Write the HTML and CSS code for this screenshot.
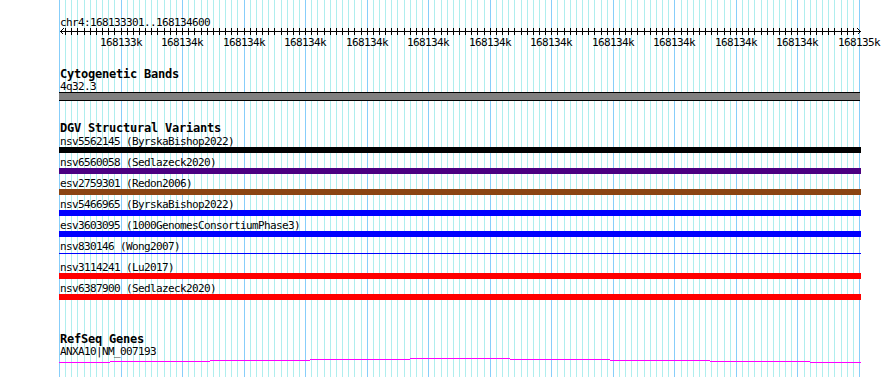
FILE: index.html
```html
<!DOCTYPE html>
<html lang="en">
<head>
    <meta charset="UTF-8">
    <meta name="viewport" content="width=device-width, initial-scale=1.0">
    <title>chr4:168133301..168134600</title>
    <link rel="stylesheet" href="styles.css">
</head>
<body>
    <div class="browser">
        <svg id="grid" class="grid" width="890" height="377"></svg>
        <div class="panel">
            <div class="locus">chr4:168133301..168134600</div>
            <svg id="ruler" class="ruler" width="890" height="22">
                <g id="ticks" class="ruler-line"></g>
                <line class="ruler-line" x1="60" y1="4.5" x2="860" y2="4.5"></line>
                <polyline class="ruler-line" points="63.5,1.5 60.5,4.5 63.5,7.5"></polyline>
                <polyline class="ruler-line" points="857.5,1.5 860.5,4.5 857.5,7.5"></polyline>
                <g class="ruler-labels">
                    <text x="121" y="19">168133k</text>
                    <text x="182" y="19">168134k</text>
                    <text x="244" y="19">168134k</text>
                    <text x="305" y="19">168134k</text>
                    <text x="367" y="19">168134k</text>
                    <text x="428" y="19">168134k</text>
                    <text x="490" y="19">168134k</text>
                    <text x="551" y="19">168134k</text>
                    <text x="613" y="19">168134k</text>
                    <text x="674" y="19">168134k</text>
                    <text x="736" y="19">168134k</text>
                    <text x="797" y="19">168134k</text>
                    <text x="859" y="19">168135k</text>
                </g>
            </svg>

            <section class="track track-cyto">
                <h2 class="track-title">Cytogenetic Bands</h2>
                <div class="feature-label">4q32.3</div>
                <div class="band"></div>
            </section>

            <section class="track track-dgv">
                <h2 class="track-title">DGV Structural Variants</h2>
                <div class="variant">
                    <div class="feature-label">nsv5562145 (ByrskaBishop2022)</div>
                    <div class="bar bar-black"></div>
                </div>
                <div class="variant">
                    <div class="feature-label">nsv6560058 (Sedlazeck2020)</div>
                    <div class="bar bar-indigo"></div>
                </div>
                <div class="variant">
                    <div class="feature-label">esv2759301 (Redon2006)</div>
                    <div class="bar bar-brown"></div>
                </div>
                <div class="variant">
                    <div class="feature-label">nsv5466965 (ByrskaBishop2022)</div>
                    <div class="bar bar-blue"></div>
                </div>
                <div class="variant">
                    <div class="feature-label">esv3603095 (1000GenomesConsortiumPhase3)</div>
                    <div class="bar bar-blue"></div>
                </div>
                <div class="variant">
                    <div class="feature-label">nsv830146 (Wong2007)</div>
                    <div class="bar bar-thin"></div>
                </div>
                <div class="variant">
                    <div class="feature-label">nsv3114241 (Lu2017)</div>
                    <div class="bar bar-red"></div>
                </div>
                <div class="variant">
                    <div class="feature-label">nsv6387900 (Sedlazeck2020)</div>
                    <div class="bar bar-red"></div>
                </div>
            </section>

            <section class="track track-genes">
                <h2 class="track-title">RefSeq Genes</h2>
                <div class="feature-label">ANXA10|NM_007193</div>
                <!-- intron "hat" spanning the whole view -->
                <svg class="gene" width="890" height="8">
                    <rect x="59" y="5" width="51" height="1"></rect>
                    <rect x="110" y="4" width="100" height="1"></rect>
                    <rect x="210" y="3" width="100" height="1"></rect>
                    <rect x="310" y="2" width="100" height="1"></rect>
                    <rect x="410" y="1" width="100" height="1"></rect>
                    <rect x="510" y="2" width="100" height="1"></rect>
                    <rect x="610" y="3" width="100" height="1"></rect>
                    <rect x="710" y="4" width="100" height="1"></rect>
                    <rect x="810" y="5" width="51" height="1"></rect>
                </svg>
            </section>
        </div>
    </div>
    <script src="script.js"></script>
</body>
</html>
```

FILE: styles.css
```css
body {
    margin: 0;
    background: #fff;
    color: #000;
    font-family: "DejaVu Sans Mono", monospace;
    font-size: 11px;
    letter-spacing: -0.62px;
}
.browser {
    position: relative;
    width: 890px;
    height: 377px;
    overflow: hidden;
}
.grid {
    position: absolute;
    top: 0;
    left: 0;
    shape-rendering: crispEdges;
}
.grid .minor {
    stroke: #afeeee;
}
.grid .major {
    stroke: #87cefa;
}
.panel {
    position: relative;
}
.locus {
    padding: 18px 0 0 60px;
    line-height: 9px;
    height: 9px;
}
.ruler {
    display: block;
    shape-rendering: crispEdges;
}
.ruler-line {
    stroke: #000;
    fill: none;
    stroke-width: 1;
}
.ruler-labels text {
    font-family: "DejaVu Sans Mono", monospace;
    font-size: 11px;
    letter-spacing: -0.62px;
    text-anchor: middle;
    fill: #000;
}
.track-title {
    margin: 0;
    padding-left: 60px;
    font-size: 12px;
    letter-spacing: -0.22px;
    font-weight: bold;
    line-height: 12px;
    height: 12px;
}
.feature-label {
    padding-left: 60px;
    line-height: 11px;
    height: 11px;
    white-space: nowrap;
}
.track-cyto {
    margin-top: 19px;
}
.track-cyto .track-title {
    margin-bottom: 1px;
}
.band {
    margin-left: 59px;
    width: 801px;
    height: 7px;
    background: #808080;
    border-top: 1px solid #000;
    border-bottom: 1px solid #000;
}
.track-dgv {
    margin-top: 21px;
}
.track-dgv .track-title {
    margin-bottom: 2px;
}
.variant {
    margin-bottom: 4px;
}
.bar {
    margin-left: 59px;
    width: 802px;
    height: 6px;
}
.bar-black {
    background: #000;
}
.bar-indigo {
    background: #4b0082;
}
.bar-brown {
    background: #8b4513;
}
.bar-blue {
    background: #0000ff;
}
.bar-red {
    background: #ff0000;
}
.bar-thin {
    box-sizing: border-box;
    border-top: 1px solid transparent;
    background: linear-gradient(#0000ff, #0000ff) no-repeat 0 0 / 100% 1px;
    background-origin: padding-box;
}
.track-genes {
    margin-top: 33px;
}
.track-genes .track-title {
    margin-bottom: 1px;
}
.gene {
    display: block;
    fill: #ff00ff;
    shape-rendering: crispEdges;
}
```

FILE: script.js
```js
// grid lines every 10 bp, heavier every 100 bp; 1300 bp over 800 px
var svgNS = 'http://www.w3.org/2000/svg';
var grid = document.getElementById('grid');
var ticks = document.getElementById('ticks');

for (var i = 0; i <= 130; i++) {
    var x = Math.round(59 + i * 800 / 130) + 0.5;

    var line = document.createElementNS(svgNS, 'line');
    line.setAttribute('x1', x);
    line.setAttribute('x2', x);
    line.setAttribute('y1', 0);
    line.setAttribute('y2', 377);
    line.setAttribute('class', i % 10 === 0 ? 'major' : 'minor');
    grid.appendChild(line);

    if (i > 0 && i < 130) {
        var tick = document.createElementNS(svgNS, 'line');
        tick.setAttribute('x1', x);
        tick.setAttribute('x2', x);
        tick.setAttribute('y1', 1);
        tick.setAttribute('y2', 8);
        ticks.appendChild(tick);
    }
}
```
